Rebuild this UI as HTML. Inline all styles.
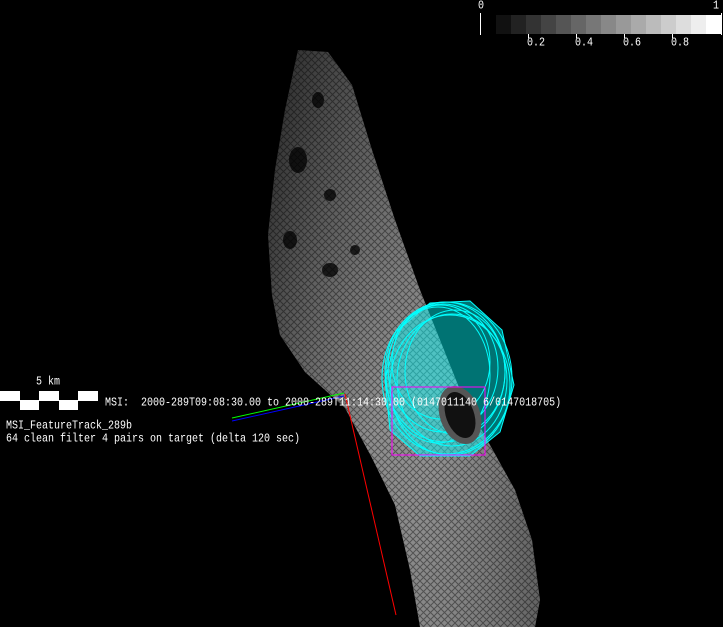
<!DOCTYPE html>
<html><head><style>
body{margin:0;width:723px;height:627px;background:#000;overflow:hidden;position:relative;font-family:"Liberation Mono",monospace;color:#fff}
.t{position:absolute;font-size:10px;white-space:pre;line-height:12px;transform:scaleY(1.2);transform-origin:0 0}
</style></head><body>
<svg width="723" height="627" style="position:absolute;left:0;top:0">
<defs>
<linearGradient id="g" x1="0" y1="0" x2="0.3" y2="1">
<stop offset="0" stop-color="#333"/><stop offset="0.35" stop-color="#5f5f5f"/><stop offset="0.7" stop-color="#8a8a8a"/><stop offset="1" stop-color="#7a7a7a"/></linearGradient>
<linearGradient id="h" x1="0" y1="0" x2="1" y2="0">
<stop offset="0" stop-color="#000" stop-opacity="0.3"/><stop offset="0.6" stop-color="#fff" stop-opacity="0.1"/><stop offset="1" stop-color="#000" stop-opacity="0.2"/></linearGradient>
<pattern id="p" width="7" height="7" patternUnits="userSpaceOnUse">
<path d="M0 7L7 0M0 0L7 7" stroke="#000" stroke-opacity="0.4" stroke-width="1"/></pattern>
</defs>
<g id="s">
<path d="M298 50L328 52L352 85L372 150L395 220L420 290L442 345L462 395L490 445L515 490L532 540L540 600L535 627L420 627L410 570L395 505L372 458L345 408L305 372L280 335L272 295L268 235L275 170L285 110Z" fill="url(#g)"/>
<path d="M298 50L328 52L352 85L372 150L395 220L420 290L442 345L462 395L490 445L515 490L532 540L540 600L535 627L420 627L410 570L395 505L372 458L345 408L305 372L280 335L272 295L268 235L275 170L285 110Z" fill="url(#h)"/>
<path d="M298 50L328 52L352 85L372 150L395 220L420 290L442 345L462 395L490 445L515 490L532 540L540 600L535 627L420 627L410 570L395 505L372 458L345 408L305 372L280 335L272 295L268 235L275 170L285 110Z" fill="url(#p)"/>
</g>
<g fill="#000" opacity="0.75"><ellipse cx="298" cy="160" rx="9" ry="13"/><ellipse cx="290" cy="240" rx="7" ry="9"/><ellipse cx="330" cy="270" rx="8" ry="7"/><ellipse cx="318" cy="100" rx="6" ry="8"/><ellipse cx="355" cy="250" rx="5" ry="5"/><ellipse cx="330" cy="195" rx="6" ry="6"/></g>
<g fill="none" stroke="#0ff" stroke-width="1">
<ellipse cx="447" cy="378" rx="65" ry="76"/>
<ellipse cx="445" cy="372" rx="60" ry="70"/>
<ellipse cx="443" cy="368" rx="55" ry="64"/>
<ellipse cx="441" cy="362" rx="49" ry="57"/>
<ellipse cx="450" cy="385" rx="60" ry="70"/>
<ellipse cx="452" cy="380" rx="55" ry="66"/>
<ellipse cx="438" cy="375" rx="52" ry="68"/>
<ellipse cx="455" cy="372" rx="50" ry="62"/>
<path d="M385 380L398 330L430 303L470 301L502 330L514 385L500 432L470 456L420 456L390 430Z" fill="#0ff" fill-opacity="0.45"/>
</g>
<ellipse cx="460" cy="415" rx="20" ry="30" fill="#555" transform="rotate(-20 460 415)"/>
<ellipse cx="460" cy="415" rx="14" ry="24" fill="#111" transform="rotate(-20 460 415)"/>
<rect x="392" y="387" width="93" height="68" fill="none" stroke="#f0f" stroke-width="1"/>
<line x1="345" y1="394" x2="396" y2="615" stroke="#f00"/>
<line x1="232" y1="418" x2="344" y2="393" stroke="#0f0"/>
<line x1="232" y1="421" x2="344" y2="396" stroke="#00f"/>
<g>
<rect x="496" y="15" width="15" height="19" fill="#111"/><rect x="511" y="15" width="15" height="19" fill="#222"/><rect x="526" y="15" width="15" height="19" fill="#333"/><rect x="541" y="15" width="15" height="19" fill="#444"/><rect x="556" y="15" width="15" height="19" fill="#555"/><rect x="571" y="15" width="15" height="19" fill="#666"/><rect x="586" y="15" width="15" height="19" fill="#777"/><rect x="601" y="15" width="15" height="19" fill="#888"/><rect x="616" y="15" width="15" height="19" fill="#999"/><rect x="631" y="15" width="15" height="19" fill="#aaa"/><rect x="646" y="15" width="15" height="19" fill="#bbb"/><rect x="661" y="15" width="15" height="19" fill="#ccc"/><rect x="676" y="15" width="15" height="19" fill="#ddd"/><rect x="691" y="15" width="15" height="19" fill="#eee"/><rect x="706" y="15" width="15" height="19" fill="#fff"/>
<line x1="480.5" y1="13" x2="480.5" y2="35" stroke="#fff"/><line x1="721.5" y1="13" x2="721.5" y2="35" stroke="#fff"/>
<line x1="528.5" y1="34" x2="528.5" y2="38" stroke="#fff"/><line x1="576.5" y1="34" x2="576.5" y2="38" stroke="#fff"/><line x1="624.5" y1="34" x2="624.5" y2="38" stroke="#fff"/><line x1="672.5" y1="34" x2="672.5" y2="38" stroke="#fff"/>
</g>
<rect x="0" y="391" width="98" height="19" fill="#fff"/>
<g fill="#000"><rect x="20" y="391" width="19" height="9"/><rect x="59" y="391" width="19" height="9"/><rect x="0" y="401" width="20" height="9"/><rect x="39" y="401" width="20" height="9"/><rect x="78" y="401" width="20" height="9"/></g>
</svg>
<div class="t" style="left:478px;top:0">0</div>
<div class="t" style="left:713px;top:0">1</div>
<div class="t" style="left:527px;top:37px">0.2</div>
<div class="t" style="left:575px;top:37px">0.4</div>
<div class="t" style="left:623px;top:37px">0.6</div>
<div class="t" style="left:671px;top:37px">0.8</div>
<div class="t" style="left:36px;top:376px">5 km</div>
<div class="t" style="left:105px;top:397px">MSI:  2000-289T09:08:30.00 to 2000-289T11:14:30.00 (0147011140 6/0147018705)</div>
<div class="t" style="left:6px;top:420px">MSI_FeatureTrack_289b</div>
<div class="t" style="left:6px;top:433px">64 clean filter 4 pairs on target (delta 120 sec)</div>
</body></html>
